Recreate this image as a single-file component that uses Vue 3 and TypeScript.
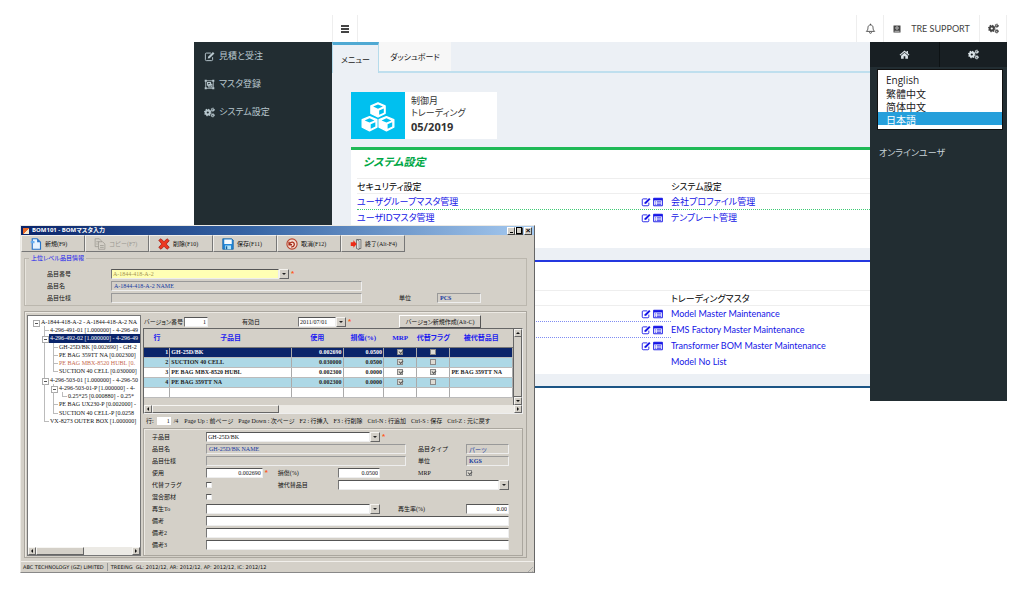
<script setup lang="ts">
import { ref } from 'vue'

interface TreeRow { guides: string[]; text: string; kind?: string }
interface Part { no: number; name: string; usage: string; loss: string; mrp: boolean; alt: boolean; replaced: string }
interface Panel { tone: string; title: string; leftHead: string; rightHead: string; left: string[]; right: string[] }

const language = ref('ja')
const selectedPart = ref(1)

const sideMenu = [
  { icon: 'edit', label: '見積と受注' },
  { icon: 'group', label: 'マスタ登録' },
  { icon: 'cogs', label: 'システム設定' },
]

const panels: Panel[] = [
  {
    tone: 'green', title: 'システム設定', leftHead: 'セキュリティ設定', rightHead: 'システム設定',
    left: ['ユーザグループマスタ管理', 'ユーザIDマスタ管理'],
    right: ['会社プロファイル管理', 'テンプレート管理'],
  },
  {
    tone: 'blue', title: '', leftHead: '', rightHead: 'トレーディングマスタ',
    left: ['', '', ''],
    right: ['Model Master Maintenance', 'EMS Factory Master Maintenance', 'Transformer BOM Master Maintenance', 'Model No List'],
  },
]

const tools = [
  { icon: 'new', label: '新規(F9)', disabled: false },
  { icon: 'copy', label: 'コピー(F7)', disabled: true },
  { icon: 'delete', label: '削除(F10)', disabled: false },
  { icon: 'save', label: '保存(F11)', disabled: false },
  { icon: 'cancel', label: '取消(F12)', disabled: false },
  { icon: 'exit', label: '終了(Alt-F4)', disabled: false },
]

const tree: TreeRow[] = [
  { guides: ['box'], text: 'A-1844-418-A-2 - A-1844-418-A-2 NA' },
  { guides: ['gap', 'tee'], text: '4-296-491-01 [1.000000] - 4-296-49' },
  { guides: ['gap', 'box line'], text: '4-296-492-02 [1.000000] - 4-296-49', kind: 'selected' },
  { guides: ['gap', 'line', 'tee'], text: 'GH-25D/BK [0.002690] - GH-2' },
  { guides: ['gap', 'line', 'tee'], text: 'PE BAG 359TT NA [0.002300]' },
  { guides: ['gap', 'line', 'tee'], text: 'PE BAG MBX-8520 HUBL [0.', kind: 'warn' },
  { guides: ['gap', 'line', 'end'], text: 'SUCTION 40 CELL [0.030000]' },
  { guides: ['gap', 'box line'], text: '4-296-503-01 [1.000000] - 4-296-50' },
  { guides: ['gap', 'line', 'box line'], text: '4-296-503-01-P [1.000000] - 4-' },
  { guides: ['gap', 'line', 'line', 'end'], text: '0.25*25 [0.000880] - 0.25*' },
  { guides: ['gap', 'line', 'tee'], text: 'PE BAG UX230-P [0.002000] -' },
  { guides: ['gap', 'line', 'end'], text: 'SUCTION 40 CELL-P [0.0258' },
  { guides: ['gap', 'end'], text: 'VX-8273 OUTER BOX [1.000000]' },
]

const parts = ref<Part[]>([
  { no: 1, name: 'GH-25D/BK', usage: '0.002690', loss: '0.0500', mrp: true, alt: false, replaced: '' },
  { no: 2, name: 'SUCTION 40 CELL', usage: '0.030000', loss: '0.0500', mrp: true, alt: false, replaced: '' },
  { no: 3, name: 'PE BAG MBX-8520 HUBL', usage: '0.002300', loss: '0.0000', mrp: true, alt: true, replaced: 'PE BAG 359TT NA' },
  { no: 4, name: 'PE BAG 359TT NA', usage: '0.002300', loss: '0.0000', mrp: true, alt: false, replaced: '' },
])

const hints = ['Page Up : 前ページ', 'Page Down : 次ページ', 'F2 : 行挿入', 'F3 : 行削除', 'Ctrl-N : 行追加', 'Ctrl-S : 保存', 'Ctrl-Z : 元に戻す']
</script>

<template>
  <svg class="defs" aria-hidden="true">
    <symbol id="i-edit" viewBox="0 0 16 16"><path d="M12.5 9v3.5a1.5 1.5 0 0 1-1.5 1.5H3.5A1.5 1.5 0 0 1 2 12.500v-8A1.500 1.500 0 0 1 3.500 3H10" fill="none" stroke="currentColor" stroke-width="1.4"/><path d="M6 8.500 13 1.500l2.200 2.200-7 7L5.500 11z" fill="currentColor"/></symbol>
    <symbol id="i-group" viewBox="0 0 16 16"><path d="M2.500 3v10M13.500 3v10M3 2.500h10M3 13.500h10" stroke="currentColor" stroke-width="1.200"/><path d="M1 1h3v3H1zM12 1h3v3h-3zM1 12h3v3H1zM12 12h3v3h-3z" fill="currentColor"/><path d="M5 5h4.500v4H5zM7 7.500h4.500v4H7z" fill="none" stroke="currentColor" stroke-width="1.500"/></symbol>
    <symbol id="i-cogs" viewBox="0 0 16 16"><g fill="none" stroke="currentColor"><circle cx="5.500" cy="8" r="3" stroke-width="2.800"/><circle cx="5.500" cy="8" r="4.600" stroke-width="1.800" stroke-dasharray="1.900 1.710"/><circle cx="12.700" cy="4" r="1.600" stroke-width="1.500"/><circle cx="12.700" cy="4" r="2.600" stroke-width="1.200" stroke-dasharray="1.300 1.420"/><circle cx="12.700" cy="12" r="1.600" stroke-width="1.500"/><circle cx="12.700" cy="12" r="2.600" stroke-width="1.200" stroke-dasharray="1.300 1.420"/></g></symbol>
    <symbol id="i-list" viewBox="0 0 16 16"><path d="M1 2h14v12H1z" fill="none" stroke="currentColor" stroke-width="1.500"/><path d="M1 2h14v3.500H1z" fill="currentColor"/><path d="M3 7.500h1.500M6 7.500h7M3 9.700h1.500M6 9.700h7M3 12h1.500M6 12h7" stroke="currentColor" stroke-width="1.100"/></symbol>
    <symbol id="i-bell" viewBox="0 0 16 16"><path d="M2 12.200c1.700-1.500 2.300-3 2.300-5.400 0-2.300 1.500-4 3.700-4s3.700 1.700 3.700 4c0 2.400.6 3.900 2.300 5.400z" fill="none" stroke="currentColor" stroke-width="1.300"/><path d="M8 1v2M6.500 13.500a1.500 1.500 0 0 0 3 0" fill="none" stroke="currentColor" stroke-width="1.300"/></symbol>
    <symbol id="i-user" viewBox="0 0 16 16"><path d="M1 1h14v14H1z" fill="currentColor"/><circle cx="8" cy="6" r="2.500" fill="none" stroke="#fff" stroke-width="1.300"/><path d="M3 12.500h10" stroke="#fff" stroke-width="1.300"/></symbol>
    <symbol id="i-home" viewBox="0 0 16 16"><path d="M8 2 .8 8.200l1 1.200L8 4.200l6.200 5.200 1-1.200-2.200-1.900V3h-2v1.600zM8 5.500l-5 4.300V14h3.800v-3.500h2.400V14H13V9.800z" fill="currentColor"/></symbol>
    <symbol id="i-cubes" viewBox="0 0 40 36"><g fill="currentColor" stroke="currentColor" stroke-width="1.500" stroke-linejoin="round"><path d="M20 2l8 3.500v8.500l-8 4-8-4V5.500zM10.500 17.500l8.300 3.500v8.500l-8.300 4-8.300-4V21zM29.500 17.500l8.300 3.500v8.500l-8.300 4-8.300-4V21z"/></g><g fill="#00c0ef"><path d="M20 4l5.500 2.300L20 8.700l-5.500-2.400zM21.300 10.700l5.200-2.200v4.600l-5.200 2.500zM10.500 19.500l5.500 2.300-5.500 2.400L5 21.800zM11.800 26.200 17 24v4.600l-5.200 2.500zM29.500 19.500l5.500 2.300-5.500 2.400-5.500-2.400zM30.800 26.200 36 24v4.600l-5.200 2.500z"/></g></symbol>
    <symbol id="i-new" viewBox="0 0 16 16"><path d="M3 1h6.500L14 5.500V15H3z" fill="#e6f3ff" stroke="#2673c9" stroke-width="1.500"/><path d="M9.500 1v4.500H14z" fill="#2673c9"/><path d="M1 4h5v3H1z" fill="#69aef0"/></symbol>
    <symbol id="i-copy" viewBox="0 0 16 16"><g fill="#d4d0c8" stroke="#9b9890"><path d="M1.500 1h5.500L10 4v7.500H1.500z"/><path d="M6 5h5.500L14.500 8v7H6z"/><path d="M8 10h5M8 12.500h5M3 5h4M3 8h2"/></g></symbol>
    <symbol id="i-delete" viewBox="0 0 16 16"><path d="M1 3 4 1l4 4 4-4 3 2.500L11 8l4 4.500L12 15l-4-4-4 4-3-2.500L5 8z" fill="#ed3820" stroke="#9f1b10"/></symbol>
    <symbol id="i-save" viewBox="0 0 16 16"><path d="M1 1h12l2 2v12H1z" fill="#2487d8" stroke="#14609f"/><path d="M3 2h10v6H3z" fill="#f6fbff"/><path d="M4 10h8v5H4z" fill="#b5e5fa"/><path d="M5 11h2v4H5z" fill="#14609f"/></symbol>
    <symbol id="i-cancel" viewBox="0 0 16 16"><circle cx="8" cy="8" r="6.800" fill="#f4dbd0" stroke="#b9442e" stroke-width="1.500"/><path d="M4 5v4h4M4.500 8.500C6 4 12 5 11 9.500c-.4 1.700-2 2.500-4 2.500" fill="none" stroke="#a72d1b" stroke-width="1.700"/></symbol>
    <symbol id="i-exit" viewBox="0 0 16 16"><path d="M9 2h5.500v12H9z" fill="#eee" stroke="#555"/><path d="M9 2l3 1.500v12L9 14z" fill="#fff" stroke="#555"/><path d="M1 5.500h3.500V3L9 8l-4.500 5v-2.500H1z" fill="#ec2b17"/></symbol>
  </svg>

  <main class="desktop">
    <section class="web">
      <header class="topbar">
        <button class="burger" aria-label="Menu"><i></i><i></i><i></i></button>
        <div class="topright">
          <button class="top-item bell" aria-label="Notifications"><svg><use href="#i-bell" /></svg></button>
          <button class="top-item account"><svg><use href="#i-user" /></svg>TRE SUPPORT</button>
          <button class="top-item gear" aria-label="Settings"><svg><use href="#i-cogs" /></svg></button>
        </div>
      </header>
      <div class="web-body">
        <nav class="side">
          <a v-for="m in sideMenu" :key="m.label" href="#"><svg><use :href="'#i-' + m.icon" /></svg>{{ m.label }}</a>
        </nav>
        <div class="content">
          <nav class="tabs">
            <a href="#" class="tab active">メニュー</a>
            <a href="#" class="tab">ダッシュボード</a>
          </nav>
          <div class="content-main">
            <div class="info">
              <div class="info-icon"><svg><use href="#i-cubes" /></svg></div>
              <div class="info-text"><span>制御月</span><span>トレーディング</span><strong>05/2019</strong></div>
            </div>
            <section v-for="p in panels" :key="p.tone" class="panel" :class="p.tone">
              <h2>{{ p.title }}</h2>
              <div class="cols head"><span>{{ p.leftHead }}</span><span>{{ p.rightHead }}</span></div>
              <div class="cols">
                <ul>
                  <li v-for="(l, i) in p.left" :key="i">
                    <a href="#">{{ l }}</a>
                    <span class="acts">
                      <button aria-label="Edit"><svg><use href="#i-edit" /></svg></button>
                      <button aria-label="List"><svg><use href="#i-list" /></svg></button>
                    </span>
                  </li>
                </ul>
                <ul><li v-for="r in p.right" :key="r"><a href="#">{{ r }}</a></li></ul>
              </div>
            </section>
            <section class="panel navy"></section>
          </div>
        </div>
        <aside class="control">
          <div class="control-tabs">
            <button aria-label="Home"><svg><use href="#i-home" /></svg></button>
            <button aria-label="Settings"><svg><use href="#i-cogs" /></svg></button>
          </div>
          <div class="lang">
            <select v-model="language" size="4" aria-label="Language">
              <option value="en">English</option>
              <option value="zh-TW">繁體中文</option>
              <option value="zh-CN">简体中文</option>
              <option value="ja">日本語</option>
            </select>
          </div>
          <h3>オンラインユーザ</h3>
        </aside>
      </div>
    </section>

    <section class="bom">
      <header class="title">
        <span class="app-icon"></span><h1>BOM101 - BOMマスタ入力</h1>
        <button class="min" aria-label="Minimize"></button><button class="max" aria-label="Maximize"></button><button class="close" aria-label="Close">×</button>
      </header>
      <div class="toolbar">
        <button v-for="t in tools" :key="t.icon" :disabled="t.disabled"><svg><use :href="'#i-' + t.icon" /></svg>{{ t.label }}</button>
      </div>

      <fieldset class="upper">
        <legend>上位レベル品目情報</legend>
        <div class="upper-grid">
          <label for="itemNo">品目番号</label>
          <div class="combo c-main"><input id="itemNo" class="yellow" value="A-1844-418-A-2"><button class="drop" aria-label="Open"></button><b class="req">*</b></div>
          <label for="itemName" class="c-first">品目名</label><input id="itemName" class="ro c-wide" readonly value="A-1844-418-A-2 NAME">
          <label for="itemSpec" class="c-first">品目仕様</label><input id="itemSpec" class="ro c-wide" readonly>
          <label for="unit" class="c-unit">単位</label><input id="unit" class="ro boldish" readonly value="PCS">
        </div>
      </fieldset>

      <div class="lower">
        <div class="tree">
          <ul>
            <li v-for="(r, i) in tree" :key="i" :class="r.kind">
              <i v-for="(g, k) in r.guides" :key="k" class="guide" :class="g"></i><span>{{ r.text }}</span>
            </li>
          </ul>
          <div class="hscroll"><button class="sb left" aria-label="Left"></button><div class="track"><div class="thumb tree-thumb"></div></div><button class="sb right" aria-label="Right"></button></div>
        </div>

        <div class="work">
          <div class="version">
            <label for="ver">バージョン番号</label><input id="ver" class="num" value="1">
            <label for="valid" class="valid">有効日</label>
            <input id="valid" class="date" value="2011/07/01"><button class="drop" aria-label="Open"></button><b class="req">*</b>
            <button class="create">バージョン新規作成(Alt-C)</button>
          </div>

          <div class="grid">
            <div class="grid-top">
              <div class="table-wrap">
                <table>
                  <colgroup><col class="w-no"><col class="w-name"><col class="w-use"><col class="w-loss"><col class="w-chk"><col class="w-chk"><col class="w-rep"></colgroup>
                  <thead><tr><th>行</th><th>子品目</th><th>使用</th><th>損傷(%)</th><th>MRP</th><th>代替フラグ</th><th>被代替品目</th></tr></thead>
                  <tbody>
                    <tr v-for="p in parts" :key="p.no" :class="{ current: p.no === selectedPart }" @click="selectedPart = p.no">
                      <td class="r">{{ p.no }}</td><td>{{ p.name }}</td><td class="r">{{ p.usage }}</td><td class="r">{{ p.loss }}</td>
                      <td class="c"><input v-model="p.mrp" type="checkbox" class="gray" aria-label="MRP"></td>
                      <td class="c"><input v-model="p.alt" type="checkbox" class="gray" aria-label="代替フラグ"></td>
                      <td>{{ p.replaced }}</td>
                    </tr>
                    <tr class="blank"><td v-for="n in 7" :key="n"></td></tr>
                  </tbody>
                </table>
              </div>
              <div class="vscroll"><button class="sb up" aria-label="Up"></button><div></div><button class="sb down" aria-label="Down"></button></div>
            </div>
            <div class="hscroll"><button class="sb left" aria-label="Left"></button><div class="track"><div class="thumb grid-thumb"></div></div><button class="sb right" aria-label="Right"></button></div>
          </div>

          <div class="hints"><label for="rowNo">行:</label><input id="rowNo" value="1"><span class="total">/4</span><span v-for="h in hints" :key="h">{{ h }}</span></div>

          <div class="detail">
            <label for="d1">子品目</label><div class="combo s-combo"><input id="d1" value="GH-25D/BK"><button class="drop" aria-label="Open"></button></div><b class="req">*</b>
            <label for="d2" class="l1">品目名</label><input id="d2" class="ro s-ro" readonly value="GH-25D/BK NAME"><label for="d2b" class="l3">品目タイプ</label><input id="d2b" class="ro last" readonly value="パーツ">
            <label for="d3" class="l1">品目仕様</label><input id="d3" class="ro s-ro" readonly><label for="d3b" class="l3">単位</label><input id="d3b" class="ro last boldish" readonly value="KGS">
            <label for="d4" class="l1">使用</label><div class="usage"><input id="d4" class="num" value="0.002690"><b class="req">*</b></div><label for="d4b">損傷(%)</label><input id="d4b" class="num" value="0.0500"><label for="d4c" class="l3">MRP</label><input id="d4c" type="checkbox" class="gray" checked>
            <label for="d5" class="l1">代替フラグ</label><input id="d5" type="checkbox"><label for="d5b">被代替品目</label><div class="combo s-long"><input id="d5b"><button class="drop" aria-label="Open"></button></div>
            <label for="d6" class="l1">混合部材</label><input id="d6" type="checkbox">
            <label for="d7" class="l1">再生To</label><div class="combo s-combo"><input id="d7"><button class="drop" aria-label="Open"></button></div><label for="d7b" class="l-rate">再生率(%)</label><input id="d7b" class="num last" value="0.00">
            <label for="d8" class="l1">備考</label><input id="d8" class="s-full">
            <label for="d9" class="l1">備考2</label><input id="d9" class="s-full">
            <label for="d10" class="l1">備考3</label><input id="d10" class="s-full">
          </div>
        </div>
      </div>
      <footer class="status"><span>ABC TECHNOLOGY (GZ) LIMITED</span><span>TREEING&nbsp; GL: 2012/12, AR: 2012/12, AP: 2012/12, IC: 2012/12</span><i class="grip"></i></footer>
    </section>
  </main>
</template>

<style>
html, body { background: #fff; }
body { margin: 0; }
</style>

<style scoped>
* { box-sizing: border-box; }
.defs { position: absolute; width: 0; height: 0; }
button, input, select { margin: 0; padding: 0; border: 0; border-radius: 0; font: inherit; color: inherit; background: none; min-width: 0; }
ul { list-style: none; margin: 0; padding: 0; }
a { text-decoration: none; color: inherit; }
h1, h2, h3 { margin: 0; font: inherit; }
.desktop { position: relative; min-height: 100vh; padding: 15px 13px 0 194px; overflow: hidden; }

/* web application */
.web { font: 9px/12px "Open Sans", "Noto Sans CJK JP", sans-serif; font-feature-settings: "palt"; color: #222; }
.web svg { width: 11px; height: 11px; flex: none; }
.topbar { display: flex; justify-content: space-between; height: 27px; padding-left: 138px; }
.burger { width: 26px; border-left: 1px solid #eee; border-right: 1px solid #eee; display: flex; flex-direction: column; justify-content: center; align-items: center; gap: 1px; }
.burger i { width: 8px; height: 2px; background: #444; }
.topright { display: flex; }
.top-item { display: flex; align-items: center; justify-content: center; border-left: 1px solid #eee; color: #444; }
.bell { width: 27px; }
.account { width: 96px; gap: 10px; font-family: Lato, "Open Sans", sans-serif; }
.top-item.account svg { width: 8px; height: 8px; }
.gear { width: 28px; border-right: 1px solid #eee; }
.web-body { display: flex; min-height: 359px; }
.side { flex: none; width: 138px; background: #222d32; color: #b8c7ce; }
.side a { display: flex; align-items: center; gap: 4px; height: 28px; padding-left: 10px; }
.content { flex: 1; min-width: 0; background: #ecf0f5; display: flex; flex-direction: column; }
.tabs { display: flex; height: 31px; border-bottom: 2px solid #bfdfee; font-size: 8px; }
.tab { display: flex; align-items: center; height: 29px; padding: 0 11px; background: #f7f7f7; }
.tab.active { height: 31px; padding: 2px 8px 0; background: #ecf0f5; border-top: 3px solid #4fa9d3; border-left: 1px solid #b5dbeb; border-right: 1px solid #b5dbeb; }
.content-main { flex: 1; display: flex; flex-direction: column; padding: 19px 0 0 19px; }
.info { display: flex; width: 146px; height: 47px; background: #fff; margin-bottom: 8px; }
.info-icon { display: flex; align-items: center; justify-content: center; width: 54px; background: #00c0ef; color: #fff; }
.info .info-icon svg { width: 36px; height: 32px; margin-top: 3px; }
.info-text { display: flex; flex-direction: column; padding: 3px 6px; color: #333; }
.info-text strong { font-size: 11px; line-height: 16px; }
.panel { background: #fff; padding-left: 6px; margin-bottom: 12px; }
.panel h2 { height: 28px; padding: 5px 6px 0; font-size: 11px; line-height: 14px; font-weight: 700; font-style: italic; color: #00a846; }
.panel.green { border-top: 3px solid #1fb956; padding-bottom: 22px; }
.panel.blue { border-top: 2px solid #2438df; padding-bottom: 4px; }
.panel.navy { flex: 1; border-top: 2px solid #1c5585; margin: 0; }
.cols { display: grid; grid-template-columns: minmax(0, 314fr) minmax(0, 199fr); }
.head { height: 16px; line-height: 15px; border-top: 1px solid #eee; border-bottom: 1px solid #eee; color: #000; }
.panel li { display: flex; justify-content: space-between; align-items: center; height: 16px; color: #1414e6; font-family: Lato, "Noto Sans CJK JP", sans-serif; white-space: nowrap; border-bottom: 1px dotted transparent; }
.panel.green li:not(:last-child) { border-bottom-color: #3fca74; }
.panel.blue ul:first-child li:not(:last-child) { border-bottom-color: #7f8cf2; }
.acts { display: flex; gap: 2px; padding-right: 8px; }
.acts button { display: flex; }
.web .acts svg { width: 10px; height: 10px; }
.control { flex: none; width: 137px; background: #222d32; color: #c8d3d8; }
.control-tabs { display: grid; grid-template-columns: 1fr 1fr; height: 25px; background: #181f23; color: #dbe4e8; }
.control-tabs button { display: flex; align-items: center; justify-content: center; }
.control-tabs button + button { border-left: 1px solid #0d1214; }
.lang { margin: 2px 4px 0 7px; height: 61px; background: #fff; border: 1px solid #111; }
.lang select { display: block; width: 100%; height: 59px; padding: 3px 0 0; overflow: hidden; outline: 0; font: 9px/13px "Open Sans", "Noto Sans CJK JP", sans-serif; color: #222; }
.lang option { min-height: 13px; height: 13px; padding: 0 8px; font-size: 10px; line-height: 13px; }
.lang option:checked { background: linear-gradient(#269fdb, #269fdb); -webkit-text-fill-color: #fff; }
.control h3 { padding: 17px 9px 0; font-size: 9px; line-height: 12px; }

/* BOM entry window */
.bom { position: absolute; left: 20px; top: 225px; width: 50.5%; background: #d4d0c8; border: 1px solid #eceae5; border-right-color: #666; border-bottom-color: #888; font: 6px/8px "Liberation Serif", "Noto Sans CJK JP", serif; color: #111; white-space: nowrap; }
.title { display: flex; align-items: center; height: 9px; padding: 0 2px; background: linear-gradient(90deg, #0a246a, #3765a5 45%, #a6caf0); color: #fff; }
.title h1 { flex: 1; padding-left: 3px; font: 700 6px/9px "Open Sans", "Noto Sans CJK JP", sans-serif; font-feature-settings: "palt"; }
.app-icon { width: 6px; height: 6px; background: linear-gradient(135deg, #e86a2b 50%, #f7e8ce 50%); }
.title button { width: 8px; height: 8px; background: #d4d0c8; border: 1px solid #fff; border-right-color: #444; border-bottom-color: #444; color: #000; font: 700 8px/5px "Liberation Sans", sans-serif; display: flex; align-items: center; justify-content: center; }
.min::after { content: ""; width: 3px; height: 1px; margin-top: 3px; background: #000; }
.max::after { content: ""; width: 5px; height: 5px; border: 1px solid #000; }
.title .close { margin-left: 1px; }
.toolbar { display: flex; height: 17px; }
.toolbar button { display: flex; align-items: center; gap: 3px; width: 64px; padding-left: 8px; border: 1px solid #f1efeb; border-right-color: #777; border-bottom-color: #777; }
.toolbar button:disabled { color: #999690; }
.toolbar svg { width: 12px; height: 12px; }
input { height: 10px; width: 100%; padding: 0 1px; background: #fff; border: 1px solid #777; border-top-color: #555; border-right-color: #eee; border-bottom-color: #eee; outline: 0; line-height: 8px; }
input.yellow { background: #ffffb4; color: #a59452; }
input.ro { background: #d4d0c8; border-color: #999 #eee #eee #999; color: #1539a0; padding-left: 2px; }
input.boldish { font-weight: 700; }
input.num { text-align: right; }
input[type=checkbox] { appearance: none; width: 6px; height: 6px; padding: 0; display: block; }
input.gray { background: #dedbd3; border: 1px solid #888; }
input[type=checkbox]:checked::after { content: ""; display: block; width: 3px; height: 2px; margin: 0 0 0 1px; border: solid #555; border-width: 0 0 1px 1px; transform: rotate(-45deg); }
.drop { flex: none; width: 10px; height: 10px; background: #d4d0c8; border: 1px solid #f4f2ee; border-right-color: #666; border-bottom-color: #666; display: flex; align-items: center; justify-content: center; }
.drop::after { content: ""; border: 2px solid transparent; border-top-color: #222; border-bottom: 0; }
.combo { display: flex; align-items: center; }
.combo input { flex: 1; }
.req { color: #ff5a1e; font: 700 8px/8px "Liberation Sans", sans-serif; padding-left: 2px; }
.upper { margin: 2px 7px 0 3px; padding: 6px 45px 1px 22px; border: 1px solid #bbb7ae; min-width: 0; box-shadow: inset 1px 0 #e7e4dd; }
.upper legend { margin-left: -18px; padding: 0 2px; height: 8px; color: #1212f0; font-feature-settings: "palt"; }
.upper-grid { display: grid; grid-template-columns: 64px minmax(0, 166fr) minmax(0, 84fr) 37px 38px 44px; grid-auto-rows: 12px; align-items: center; }
.c-first { grid-column: 1; }
.c-main { grid-column: 2 / 4; padding-right: 68px; }
.c-wide { grid-column: 2 / 4; }
.c-unit { grid-column: 5; }
.lower { display: grid; grid-template-columns: minmax(0, 3fr) minmax(0, 10fr); gap: 2px; margin: 5px 7px 3px 3px; padding: 3px 3px 1px 2px; border: 1px solid #aaa69e; box-shadow: inset 1px 1px #ece9e3; }
.tree { display: flex; flex-direction: column; justify-content: space-between; min-width: 0; background: #fff; border: 1px solid #777; overflow: hidden; }
.tree ul { display: grid; grid-auto-rows: 1fr; height: 107px; padding-left: 3px; margin-top: 2px; }
.tree li { display: flex; }
.tree li span { padding: 0 1px; }
.tree li.selected span { background: #0a246a; color: #fff; flex: 1; }
.tree li.warn { color: #c66a4e; }
.guide { flex: none; width: 9px; position: relative; }
.guide.line { background: linear-gradient(#bbb, #bbb) 4px 0 / 1px 100% no-repeat; }
.guide.tee { background: linear-gradient(#bbb, #bbb) 4px 0 / 1px 100% no-repeat, linear-gradient(#bbb, #bbb) 4px 4px / 5px 1px no-repeat; }
.guide.end { background: linear-gradient(#bbb, #bbb) 4px 0 / 1px 4px no-repeat, linear-gradient(#bbb, #bbb) 4px 4px / 5px 1px no-repeat; }
.guide.box::before { content: ""; position: absolute; left: 2px; top: 2px; width: 5px; height: 5px; border: 1px solid #aaa; background: linear-gradient(#555, #555) center / 3px 1px no-repeat #fff; }
.hscroll { display: flex; height: 8px; }
.track { flex: 1; background: #eceae5; }
.thumb { height: 8px; background: #d4d0c8; border: 1px solid #f6f5f2; border-right-color: #666; border-bottom-color: #666; }
.tree-thumb { width: 50%; }
.grid-thumb { width: 35%; }
.sb { flex: none; width: 8px; height: 8px; background: #d4d0c8; border: 1px solid #f6f5f2; border-right-color: #666; border-bottom-color: #666; display: flex; align-items: center; justify-content: center; }
.sb::after { content: ""; border: 2px solid transparent; }
.sb.left::after { border-right-color: #111; border-left: 0; }
.sb.right::after { border-left-color: #111; border-right: 0; }
.sb.up::after { border-bottom-color: #111; border-top: 0; }
.sb.down::after { border-top-color: #111; border-bottom: 0; }
.work { min-width: 0; }
.version { display: flex; align-items: center; height: 13px; padding-left: 1px; font-feature-settings: "palt"; }
.version label { width: 40px; }
.version .num { width: 24px; }
.version .valid { width: 56px; margin-left: 34px; }
.version .date { width: 38px; }
.version .create { width: 82px; height: 13px; margin: 0 42px 0 auto; border: 1px solid #fff; border-right-color: #555; border-bottom-color: #555; }
.grid { border: 1px solid #666; border-right-color: #eee; border-bottom-color: #eee; }
.grid-top { display: flex; height: 76px; }
.table-wrap { flex: 1; min-width: 0; border-right: 1px solid #666; }
table { width: 100%; table-layout: fixed; border-collapse: collapse; font-size: 6px; line-height: 8px; }
th { height: 18px; padding: 0; color: #1b1bf0; font-size: 7px; font-weight: 700; background: #d4d0c8; border-bottom: 1px solid #777; font-feature-settings: "palt"; }
td { height: 10px; padding: 0 1px; background: #fff; border-right: 1px solid #aaa; border-bottom: 1px solid #bbb; overflow: hidden; font-weight: 700; color: #222; }
tbody tr:nth-child(even) td { background: #add8e6; }
tbody tr.current td { background: #0a246a; color: #fff; }
.r { text-align: right; }
.c input { margin: 0 auto; }
.w-no { width: 7%; } .w-name { width: 33%; } .w-use { width: 14%; } .w-loss { width: 11%; } .w-chk { width: 9%; } .w-rep { width: 17%; }
.vscroll { display: flex; flex-direction: column; width: 8px; background: #eceae5; }
.vscroll div { flex: 1; background: #d4d0c8; border-right: 1px solid #666; border-bottom: 1px solid #666; }
.hints { display: flex; align-items: center; gap: 5px; height: 14px; padding-left: 3px; font-feature-settings: "palt"; }
.hints label { margin-right: -2px; }
.hints input { width: 14px; height: 8px; text-align: right; border: 0; }
.hints .total { margin: 0 1px 0 -2px; }
.detail { display: grid; grid-template-columns: 54px minmax(0, 73fr) 60px minmax(0, 43fr) 18px 8px 12px 48px 43px; grid-auto-rows: 12px; align-items: center; padding: 2px 13px 4px 8px; border: 1px solid #aaa69e; box-shadow: inset 1px 1px #ece9e3; }
.l1 { grid-column: 1; }
.l3 { grid-column: 8; }
.l-rate { grid-column: 6 / 9; }
.last { grid-column: 9; }
.s-combo { grid-column: 2 / 5; }
.s-ro { grid-column: 2 / 7; }
.s-long { grid-column: 4 / 10; }
.s-full { grid-column: 2 / 10; }
.usage { display: flex; align-items: center; padding-right: 10px; }
.status { display: flex; align-items: center; height: 11px; padding-left: 2px; border-top: 1px solid #f1efeb; font: 5px/8px "DejaVu Sans", sans-serif; }
.status span + span { margin-left: 3px; padding-left: 3px; border-left: 1px solid #999; }
.grip { margin: 3px 1px 0 auto; width: 7px; height: 7px; background: repeating-linear-gradient(135deg, #aaa 0 1px, transparent 1px 3px); clip-path: polygon(100% 0, 100% 100%, 0 100%); }
</style>
